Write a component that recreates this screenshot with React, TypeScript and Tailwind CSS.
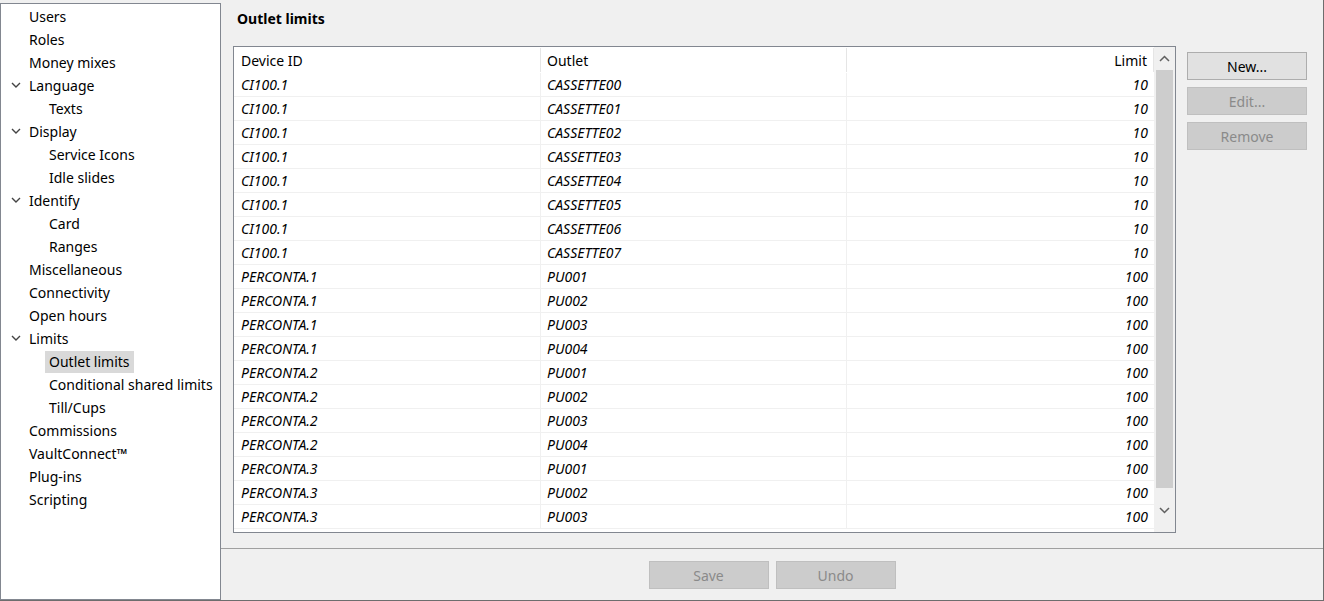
import React from "react";

const font = { fontFamily: '"Noto Sans", "Open Sans", sans-serif' };

type TreeItem = { label: string; level: number; expanded?: boolean; selected?: boolean };

const tree: TreeItem[] = [
  { label: "Users", level: 1 },
  { label: "Roles", level: 1 },
  { label: "Money mixes", level: 1 },
  { label: "Language", level: 1, expanded: true },
  { label: "Texts", level: 2 },
  { label: "Display", level: 1, expanded: true },
  { label: "Service Icons", level: 2 },
  { label: "Idle slides", level: 2 },
  { label: "Identify", level: 1, expanded: true },
  { label: "Card", level: 2 },
  { label: "Ranges", level: 2 },
  { label: "Miscellaneous", level: 1 },
  { label: "Connectivity", level: 1 },
  { label: "Open hours", level: 1 },
  { label: "Limits", level: 1, expanded: true },
  { label: "Outlet limits", level: 2, selected: true },
  { label: "Conditional shared limits", level: 2 },
  { label: "Till/Cups", level: 2 },
  { label: "Commissions", level: 1 },
  { label: "VaultConnect™", level: 1 },
  { label: "Plug-ins", level: 1 },
  { label: "Scripting", level: 1 },
];

const rows: [string, string, string][] = [
  ["CI100.1", "CASSETTE00", "10"],
  ["CI100.1", "CASSETTE01", "10"],
  ["CI100.1", "CASSETTE02", "10"],
  ["CI100.1", "CASSETTE03", "10"],
  ["CI100.1", "CASSETTE04", "10"],
  ["CI100.1", "CASSETTE05", "10"],
  ["CI100.1", "CASSETTE06", "10"],
  ["CI100.1", "CASSETTE07", "10"],
  ["PERCONTA.1", "PU001", "100"],
  ["PERCONTA.1", "PU002", "100"],
  ["PERCONTA.1", "PU003", "100"],
  ["PERCONTA.1", "PU004", "100"],
  ["PERCONTA.2", "PU001", "100"],
  ["PERCONTA.2", "PU002", "100"],
  ["PERCONTA.2", "PU003", "100"],
  ["PERCONTA.2", "PU004", "100"],
  ["PERCONTA.3", "PU001", "100"],
  ["PERCONTA.3", "PU002", "100"],
  ["PERCONTA.3", "PU003", "100"],
];

function Chevron() {
  return (
    <svg width="10" height="7" viewBox="0 0 10 7" className="block">
      <polyline points="1,1 5,5 9,1" fill="none" stroke="#444" strokeWidth="1.4" />
    </svg>
  );
}

function Btn({ label, disabled }: { label: string; disabled?: boolean }) {
  return (
    <div
      className={
        disabled
          ? "w-[120px] h-[28px] flex items-center justify-center border border-[#bfbfbf] bg-[#cccccc] text-[#8a8a8a] text-[14px]"
          : "w-[120px] h-[28px] flex items-center justify-center border border-[#adadad] bg-[#e1e1e1] text-black text-[14px]"
      }
    >
      {label}
    </div>
  );
}

export default function App() {
  return (
    <div style={font} className="w-[1324px] h-[601px] flex bg-[#f0f0f0] border-r border-b border-[#6d6d6d] overflow-hidden text-black">
      <div className="w-[221px] shrink-0 mt-[3px] border border-[#828790] bg-white pt-[1px]">
        {tree.map((t) => (
          <div key={t.label} className="h-[23px] flex items-center text-[14px] whitespace-nowrap">
            <div className="w-[28px] shrink-0 flex justify-center pl-[2px]">
              {t.expanded ? <Chevron /> : null}
            </div>
            {t.level === 2 ? <div className="w-[16px] shrink-0" /> : null}
            <div
              className={
                t.level === 2
                  ? t.selected
                    ? "px-[4px] h-[22px] flex items-center bg-[#d9d9d9]"
                    : "px-[4px] h-[22px] flex items-center"
                  : ""
              }
            >
              {t.label}
            </div>
          </div>
        ))}
      </div>

      <div className="flex-1 flex flex-col min-w-0">
        <div className="h-[46px] pl-[16px] pt-[8px] text-[14px] font-bold">Outlet limits</div>
        <div className="flex pl-[12px] pr-[16px] gap-[11px]">
          <div className="w-[943px] h-[487px] border border-[#828790] bg-white flex overflow-hidden">
            <div className="flex-1 flex flex-col overflow-hidden">
              <div className="h-[26px] shrink-0 flex text-[14px]">
                <div className="w-[307px] pl-[7px] flex items-center border-r border-[#e5e5e5] my-[1px]">Device ID</div>
                <div className="w-[306px] pl-[6px] flex items-center border-r border-[#e5e5e5] my-[1px]">Outlet</div>
                <div className="w-[307px] pr-[6px] flex items-center justify-end border-r border-[#e5e5e5] my-[1px]">Limit</div>
              </div>
              {rows.map((r, i) => (
                <div key={i} className="h-[24px] shrink-0 flex text-[14px] italic border-b border-[#f0f0f0]">
                  <div className="w-[307px] pl-[7px] flex items-center border-r border-[#f0f0f0]">{r[0]}</div>
                  <div className="w-[306px] pl-[6px] flex items-center border-r border-[#f0f0f0]">{r[1]}</div>
                  <div className="w-[307px] pr-[6px] flex items-center justify-end">{r[2]}</div>
                </div>
              ))}
            </div>
            <div className="w-[21px] shrink-0 bg-[#f0f0f0] flex flex-col items-center">
              <div className="h-[23px] flex items-center justify-center">
                <svg width="11" height="7" viewBox="0 0 11 7">
                  <polyline points="1,6 5.5,1.5 10,6" fill="none" stroke="#606060" strokeWidth="1.5" />
                </svg>
              </div>
              <div className="w-[17px] h-[418px] bg-[#cdcdcd]" />
              <div className="flex-1 flex items-center justify-center">
                <svg width="11" height="7" viewBox="0 0 11 7">
                  <polyline points="1,1 5.5,5.5 10,1" fill="none" stroke="#606060" strokeWidth="1.5" />
                </svg>
              </div>
            </div>
          </div>
          <div className="flex flex-col gap-[7px] pt-[6px]">
            <Btn label="New..." />
            <Btn label="Edit..." disabled />
            <Btn label="Remove" disabled />
          </div>
        </div>
        <div className="mt-[15px] border-t border-[#a0a0a0] flex-1 flex justify-center gap-[7px] pt-[12px]">
          <Btn label="Save" disabled />
          <Btn label="Undo" disabled />
        </div>
      </div>
    </div>
  );
}
